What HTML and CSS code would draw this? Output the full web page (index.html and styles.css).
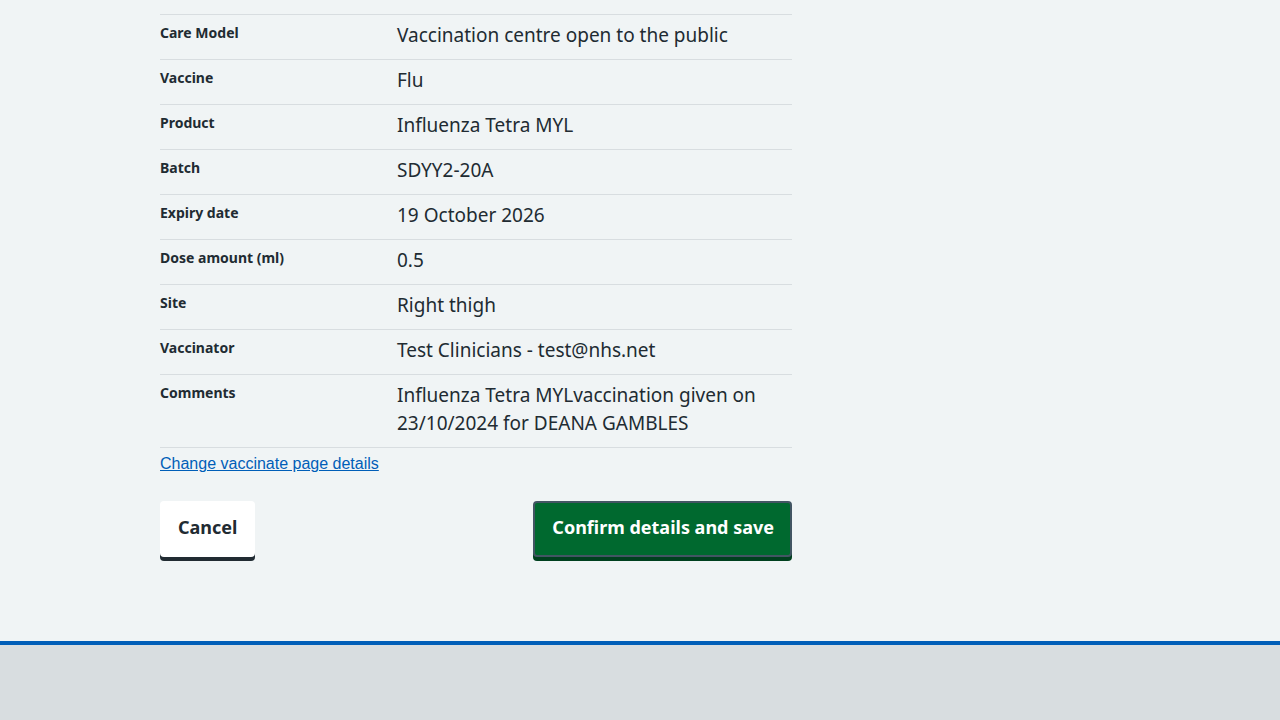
FILE: index.html
```html
<!DOCTYPE html>
<html lang="en">
<head>
<meta charset="utf-8">
<title>Check and confirm</title>
<link rel="stylesheet" href="styles.css">
</head>
<body>
<main class="page">
  <div class="container">
    <dl class="summary">
      <div class="row"><dt class="key">Care Model</dt><dd class="value">Vaccination centre open to the public</dd></div>
      <div class="row"><dt class="key">Vaccine</dt><dd class="value">Flu</dd></div>
      <div class="row"><dt class="key">Product</dt><dd class="value">Influenza Tetra MYL</dd></div>
      <div class="row"><dt class="key">Batch</dt><dd class="value">SDYY2-20A</dd></div>
      <div class="row"><dt class="key">Expiry date</dt><dd class="value">19 October 2026</dd></div>
      <div class="row"><dt class="key">Dose amount (ml)</dt><dd class="value">0.5</dd></div>
      <div class="row"><dt class="key">Site</dt><dd class="value">Right thigh</dd></div>
      <div class="row"><dt class="key">Vaccinator</dt><dd class="value">Test Clinicians - test@nhs.net</dd></div>
      <div class="row"><dt class="key">Comments</dt><dd class="value">Influenza Tetra MYLvaccination given on 23/10/2024 for DEANA GAMBLES</dd></div>
    </dl>
    <a class="change-link" href="#">Change vaccinate page details</a>
    <div class="actions">
      <button class="btn btn-secondary" type="button">Cancel</button>
      <button class="btn btn-primary" type="button">Confirm details and save</button>
    </div>
  </div>
</main>
<footer class="footer"></footer>
</body>
</html>
```
FILE: styles.css
```css
html, body {
  margin: 0;
  padding: 0;
}
body {
  background: #f0f4f5;
  color: #212b32;
  font-family: "Noto Sans", "Liberation Sans", sans-serif;
}
.page {
  padding-top: 14px;
  padding-bottom: 84px;
}
.container {
  width: 632px;
  margin-left: 160px;
}
.summary {
  margin: 0;
  border-top: 1px solid #d8dde0;
}
.row {
  display: flex;
  border-bottom: 1px solid #d8dde0;
}
.key {
  width: 237px;
  flex: none;
  font-size: 14px;
  font-weight: 700;
  line-height: 20px;
  padding: 8px 0;
}
.value {
  margin: 0;
  flex: 1;
  font-size: 19px;
  line-height: 28px;
  padding: 6px 0 10px;
}
.change-link {
  display: inline-block;
  margin-top: 6px;
  font-family: "Liberation Sans", Arial, sans-serif;
  font-size: 16px;
  line-height: 20px;
  color: #005eb8;
  text-decoration: underline;
}
.actions {
  display: flex;
  justify-content: space-between;
  margin-top: 27px;
}
.btn {
  font-family: "Noto Sans", "Liberation Sans", sans-serif;
  font-size: 18px;
  font-weight: 700;
  line-height: 24px;
  border-radius: 4px;
  cursor: pointer;
  padding: 12px 16px 16px;
}
.btn-secondary {
  background: #ffffff;
  color: #212b32;
  border: 2px solid transparent;
  box-shadow: 0 4px 0 #212b32;
}
.btn-primary {
  background: #00692f;
  color: #ffffff;
  border: 2px solid #425563;
  padding-left: 17px;
  box-shadow: 0 4px 0 #00401e;
}
.footer {
  border-top: 4px solid #005eb8;
  background: #d8dde0;
  height: 75px;
}
```
